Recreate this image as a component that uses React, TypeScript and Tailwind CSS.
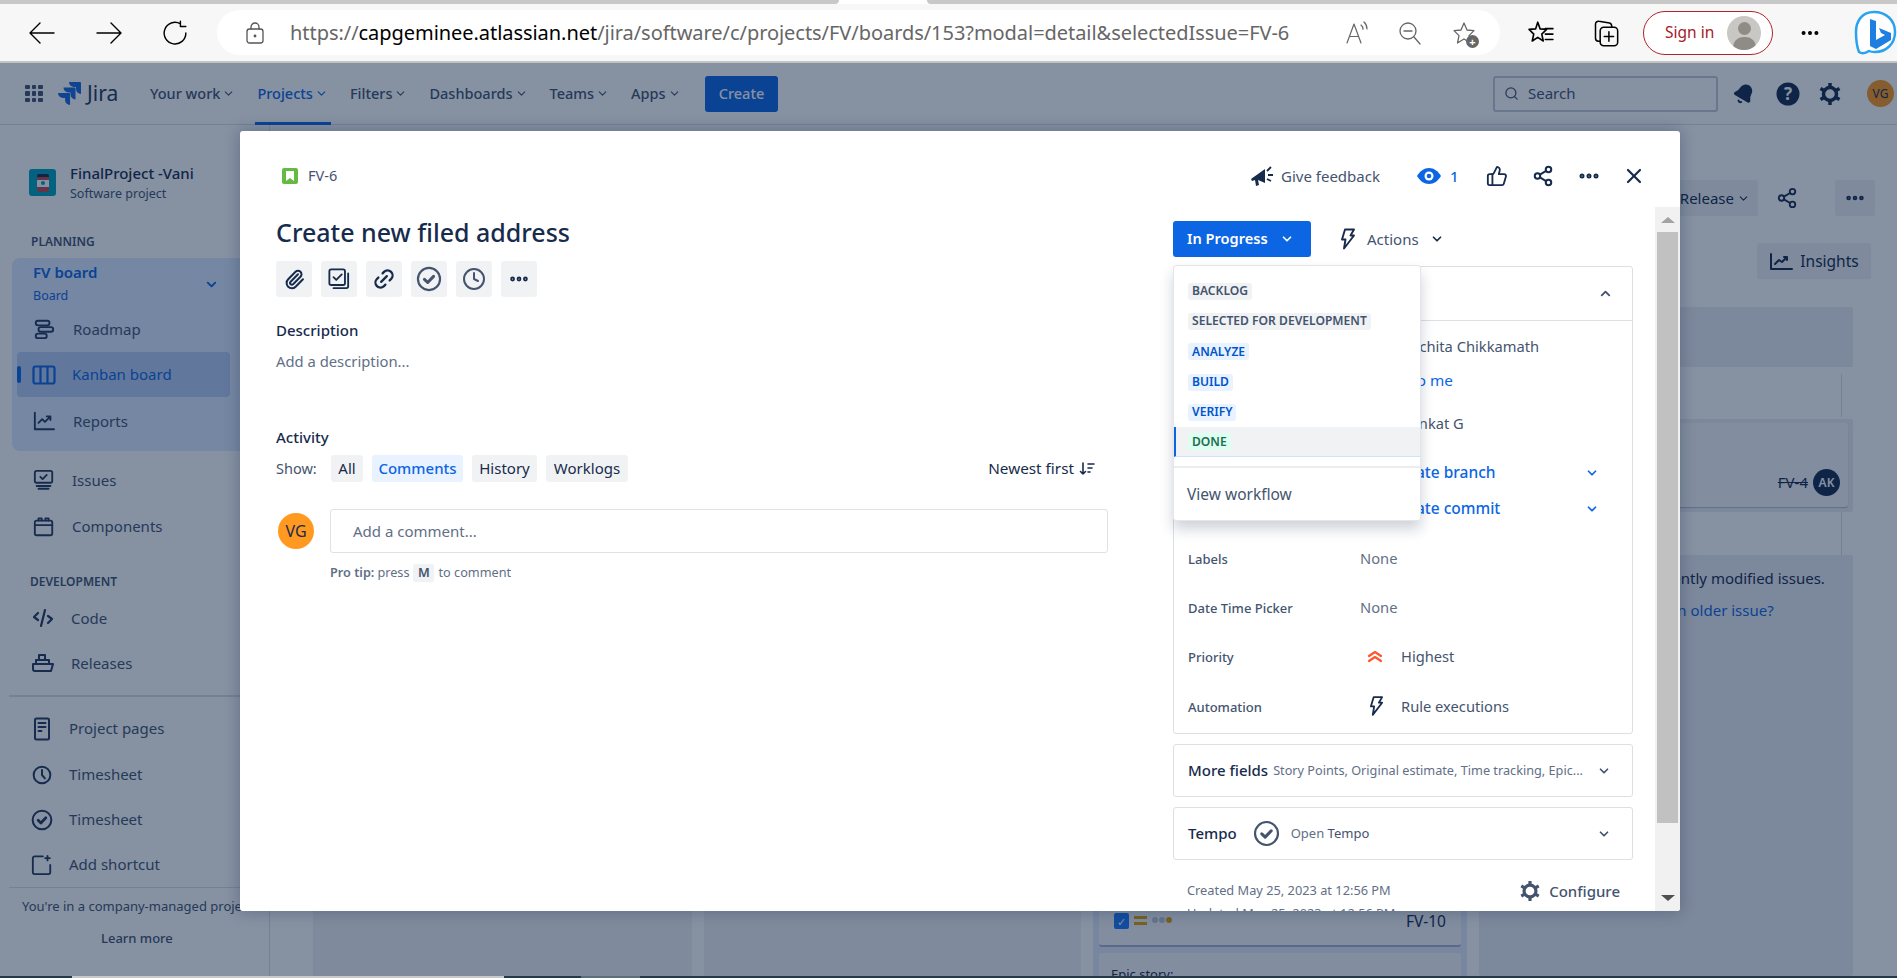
import {
  Bell,
  ChevronDown,
  ChevronUp,
  Clock,
  Ellipsis,
  Link2,
  Paperclip,
  Search,
  Share2,
  ThumbsUp,
  X,
} from 'lucide-react'
import { SiJira } from 'react-icons/si'

function Svg({ w = 24, h = 24, vb = '0 0 24 24', sw = 2, className = '', children }: { w?: number; h?: number; vb?: string; sw?: number; className?: string; children: React.ReactNode }) {
  return (
    <svg width={w} height={h} viewBox={vb} fill="none" stroke="currentColor" strokeWidth={sw} strokeLinecap="round" strokeLinejoin="round" className={className}>
      {children}
    </svg>
  )
}

function CheckCircle({ size = 24, sw = 2.2 }: { size?: number; sw?: number }) {
  return (
    <Svg w={size} h={size} sw={sw}>
      <circle cx="12" cy="12" r="10.2" />
      <path d="M7.8 12.3l3 2.9 5.4-5.6" strokeWidth={sw + 0.8} />
    </Svg>
  )
}

function Bolt({ w = 16, h = 22 }: { w?: number; h?: number }) {
  return (
    <Svg w={w} h={h} vb="0 0 16 22" sw={1.9}>
      <path d="M5 1.5h9L10.5 7.5H14L4 20.5l1.5-9H2z" />
    </Svg>
  )
}

function Gear({ size, color }: { size: number; color: string }) {
  return (
    <svg width={size} height={size} viewBox="0 0 24 24" fill="none" stroke={color} strokeWidth="3.500">
      <circle cx="12" cy="12" r="6.500" />
      <path d="M12 1v4M12 19v4M2.500 6.500l3.500 2M18 15.500l3.500 2M2.500 17.500l3.500-2M18 8.500l3.500-2" />
    </svg>
  )
}

function Lozenge({ tone, children }: { tone: 'gray' | 'blue' | 'green'; children: React.ReactNode }) {
  const styles = {
    gray: 'bg-[#f1f2f4] text-[#44546f]',
    blue: 'bg-[#e9f2ff] text-[#0055cc]',
    green: 'bg-[#dcfff1] text-[#216e4e]',
  }
  return <span className={`flex h-[17px] items-center rounded-[3px] px-[4px] text-[12.100px] font-semibold ${styles[tone]}`}>{children}</span>
}

function BrowserBar() {
  return (
    <div className="h-[63px] bg-[#f7f7f7]">
      <div className="flex h-[4px] bg-white">
        <div className="w-[839px] rounded-br bg-[#c8c8c8]" />
        <div className="ml-[88px] flex-1 rounded-bl bg-[#c8c8c8]" />
      </div>
      <div className="flex h-[57px] items-center text-black">
        <div className="ml-[29px] flex w-[188px] items-center">
          <Svg w={26} h={22} vb="0 0 26 22" sw={1.4}><path d="M25 11H1M11 1L1 11l10 10" /></Svg>
          <Svg w={26} h={22} vb="0 0 26 22" sw={1.4} className="ml-[41px]"><path d="M1 11h24M15 1l10 10-10 10" /></Svg>
          <Svg w={26} h={26} sw={1.3} className="ml-[40px]"><path d="M17 3.5A10 10 0 1 0 22 12M17 1v5h5" /></Svg>
        </div>
        <div className="flex h-[45px] w-[1283px] items-center rounded-full bg-white pl-[29px]">
          <Svg w={18} h={22} vb="0 0 18 22" sw={1.3} className="text-[#555]">
            <rect x="1" y="7" width="16" height="14" rx="2.5" />
            <path d="M5 7V5a4 4 0 0 1 8 0v2" />
            <circle cx="9" cy="14" r=".8" />
          </Svg>
          <div className="ml-[26px] w-[1010px] whitespace-nowrap text-[20px] tracking-[-0.05px] text-[#666]">
            https://<span className="text-black">capgeminee.atlassian.net</span>/jira/software/c/projects/FV/boards/153?modal=detail&amp;selectedIssue=FV-6
          </div>
          <div className="ml-[45px] text-[#666]">
            <Svg w={24} h={26} vb="0 0 24 26" sw={1.2}>
              <path d="M2 23L9 4l7 19M4.5 16.5h9M16 5c1.5 1.2 2 2.7 2 4.3M19 2c2.2 2 3 4.5 3 7" />
            </Svg>
          </div>
          <div className="ml-[29px] text-[#666]">
            <Svg w={24} h={26} sw={1.3}><circle cx="10" cy="10" r="8" /><path d="M6 10h8M16 16l6 7" /></Svg>
          </div>
          <div className="relative ml-[30px] text-[#666]">
            <Svg w={24} h={26} sw={1.3}><path d="M12 2l3 7 7 .6-5 5 1.5 7.4L12 18l-6.5 4L7 14.6 2 9.6 9 9z" /></Svg>
            <span className="absolute right-[-3px] bottom-[-2px] flex h-[13px] w-[13px] items-center justify-center rounded-full bg-[#666] text-[11px] leading-none font-bold text-white">+</span>
          </div>
        </div>
        <div className="ml-[28px]">
          <Svg w={26} h={28} sw={1.5}>
            <path d="M9 2l2.2 6.2 6 .5-4.5 4.3 1.4 6.4L9 16l-5.100 3.400 1.400-6.400L1 8.700l6-.5zM16 8h7M16 13h7M16 18h7" />
          </Svg>
        </div>
        <div className="ml-[38px]">
          <Svg w={28} h={30} sw={1.3}>
            <rect x="7" y="7" width="15" height="16" rx="3" />
            <path d="M7 19H5.500A2.500 2.500 0 0 1 3 16.500V4.500A2.500 2.500 0 0 1 6 2l9 1.500c1.500.300 2 1.500 2 3.500M14.500 11v8M10.500 15h8" />
          </Svg>
        </div>
        <div className="ml-[23px] flex h-[44px] w-[130px] items-center rounded-full border-[1.5px] border-[#b1242b] bg-white pl-[21px] text-[15.500px] text-[#a4202a]">
          Sign in
          <div className="relative ml-[13px] h-[34px] w-[34px] overflow-hidden rounded-full bg-[#c9c7c3]">
            <div className="absolute top-[6px] left-[11px] h-[13px] w-[13px] rounded-full bg-[#8f8c87]" />
            <div className="absolute top-[21px] left-[6px] h-[20px] w-[23px] rounded-full bg-[#8f8c87]" />
          </div>
        </div>
        <Ellipsis size={22} strokeWidth={2.4} className="ml-[26px]" />
        <div className="ml-[32px]">
          <svg width="44" height="46" viewBox="0 0 44 46" fill="none">
            <path d="M21 2C9 2 3 11 3 22c0 8 1 15 3 20 3 2 7 1 10-1 2 1 4 1 6 1 11 0 20-8 20-20S33 2 21 2z" fill="#fff" stroke="#2aa3ee" strokeWidth="2.500" />
            <path d="M17 9l6 2v19l9-5-4-2-2-5 12 5v7l-15 9-6-3z" fill="#1f7fe0" />
          </svg>
        </div>
      </div>
      <div className="h-[2px] bg-[#c4c4c4]" />
    </div>
  )
}

function TopNav({ label, active }: { label: string; active?: boolean }) {
  return (
    <div className={`relative flex h-[62px] items-center gap-[2px] text-[14.500px] font-medium whitespace-nowrap ${active ? 'text-[#0c66e4]' : 'text-[#44546f]'}`}>
      {label}
      <ChevronDown size={13} strokeWidth={2} />
      {active && <div className="absolute right-[-3px] bottom-0 left-[-2px] h-[3px] bg-[#0c66e4]" />}
    </div>
  )
}

function JiraHeader() {
  return (
    <div className="flex h-[62px] items-center border-b-[1.500px] border-[#dcdfe4] pl-[25px] text-[#172b4d]">
      <div className="grid w-[18px] grid-cols-3 gap-[2px]">
        {[0, 1, 2, 3, 4, 5, 6, 7, 8].map(i => <span key={i} className="h-[4.500px] w-[4.500px] rounded-[1px] bg-[#44546f]" />)}
      </div>
      <SiJira size={23} className="ml-[15px] text-[#1868db]" />
      <span className="ml-[6px] w-[34px] text-[21px] leading-none text-[#253858]">Jira</span>
      <div className="ml-[29px] flex w-[555px] gap-[22px]">
        <TopNav label="Your work" />
        <TopNav label="Projects" active />
        <TopNav label="Filters" />
        <TopNav label="Dashboards" />
        <TopNav label="Teams" />
        <TopNav label="Apps" />
      </div>
      <div className="flex h-[36px] w-[73px] items-center justify-center rounded-[3px] bg-[#0c66e4] text-[14.500px] font-medium text-white">Create</div>
      <div className="ml-[715px] flex h-[36px] w-[225px] items-center gap-[9px] rounded-[3px] border-2 border-[#c5ccd8] pl-[9px] text-[15px] text-[#44546f]">
        <Search size={15} strokeWidth={2} /> Search
      </div>
      <Bell size={22} fill="currentColor" strokeWidth={2} className="ml-[15px] rotate-[30deg] text-[#172b4d]" />
      <svg width="24" height="24" viewBox="0 0 24 24" className="ml-[21px]">
        <circle cx="12" cy="12" r="11.500" fill="#172b4d" />
        <text x="12" y="18" textAnchor="middle" fontSize="17" fontWeight="700" fill="#fff">?</text>
      </svg>
      <div className="ml-[18px]"><Gear size={24} color="#172b4d" /></div>
      <div className="ml-[25px] flex h-[27px] w-[27px] items-center justify-center rounded-full bg-[#ff991f] text-[12px] text-[#172b4d]">VG</div>
    </div>
  )
}

function NavRow({ icon, label, h = 44, gap = 16, pl = 32 }: { icon: React.ReactNode; label: string; h?: number; gap?: number; pl?: number }) {
  return (
    <div className="flex items-center text-[15px] text-[#44546f]" style={{ height: h, paddingLeft: pl }}>
      <div className="flex w-[24px] justify-center text-[#253858]">{icon}</div>
      <span style={{ marginLeft: gap }}>{label}</span>
    </div>
  )
}

function Sidebar() {
  return (
    <div className="w-[270px] shrink-0 border-r border-[#dcdfe4]">
      <div className="mt-[36px] flex h-[43px] items-center pl-[29px]">
        <div className="flex h-[27px] w-[27px] items-center justify-center rounded-[3px] bg-[#00a3bf]">
          <div className="h-[18px] w-[12px] overflow-hidden rounded-[2px] bg-[#c1494e]">
            <div className="h-[3px] bg-[#172b4d]" />
            <div className="mt-[3px] flex h-[7px] items-center justify-center bg-white">
              <span className="h-[4px] w-[4px] rounded-full bg-[#00a3bf]" />
            </div>
          </div>
        </div>
        <div className="ml-[14px]">
          <div className="text-[15px] leading-[22px] font-medium text-[#172b4d]">FinalProject -Vani</div>
          <div className="text-[12.500px] leading-[20px] text-[#44546f]">Software project</div>
        </div>
      </div>
      <div className="mt-[28px] flex h-[20px] items-center pl-[31px] text-[12px] font-semibold text-[#44546f]">PLANNING</div>
      <div className="mx-[12px] mt-[6px] h-[193px] rounded-[8px] bg-[#deebff]">
        <div className="flex h-[50px] items-center pt-[2px] pr-[38px] pl-[21px] text-[#0c66e4]">
          <div className="flex-1">
            <div className="text-[15px] leading-[24px] font-semibold">FV board</div>
            <div className="text-[12.500px] leading-[24px]">Board</div>
          </div>
          <ChevronDown size={15} strokeWidth={3} />
        </div>
        <div className="-ml-[12px]">
          <div className="-mt-[1px] mb-[1px]">
            <NavRow icon={<Svg w={22} h={22} sw={2}><rect x="3" y="3" width="15" height="5" rx="2.500" /><rect x="6" y="10" width="16" height="5" rx="2.500" /><rect x="3" y="17" width="12" height="5" rx="2.500" /></Svg>} label="Roadmap" gap={17} />
          </div>
          <div className="relative ml-[17px] flex h-[45px] w-[213px] items-center rounded-[4px] bg-[#b9ccf3] text-[15px] text-[#0c66e4]">
            <div className="absolute left-0 h-[17px] w-[4px] rounded-full bg-[#0c66e4]" />
            <div className="ml-[15px] flex w-[24px] justify-center">
              <Svg w={24} h={20} vb="0 0 24 20" sw={2.200}><rect x="1.500" y="1.500" width="21" height="17" rx="2" /><path d="M8.500 2v16M15.500 2v16" /></Svg>
            </div>
            <span className="ml-[16px]">Kanban board</span>
          </div>
          <NavRow icon={<Svg w={24} h={22} sw={2}><path d="M2 3v18h21M6 14l4-4 3 3 6-6M15 7h4v4" /></Svg>} label="Reports" h={48} gap={17} />
        </div>
      </div>
      <div className="mt-[6px]">
        <NavRow icon={<Svg w={22} h={22} sw={2}><rect x="2" y="2" width="19" height="13" rx="2" /><path d="M8 8.500l2.500 2.500L15 6.500M4 18.500h15M6 21.500h11" /></Svg>} label="Issues" h={46} gap={16} pl={32} />
        <NavRow icon={<Svg w={22} h={22} sw={2}><rect x="2" y="5" width="19" height="16" rx="2" /><path d="M2 10h19M6 5V2.500h3.500V5M13.500 5V2.500H17V5" /></Svg>} label="Components" h={47} gap={16} pl={32} />
      </div>
      <div className="mt-[22px] flex h-[20px] items-center pl-[30px] text-[12px] font-semibold text-[#44546f]">DEVELOPMENT</div>
      <div className="mt-[4px]">
        <NavRow icon={<Svg w={22} h={20} vb="0 0 22 20" sw={2.200}><path d="M6 5L2 9l4 3M16 8l4 3-4 4M13 2L9 18" /></Svg>} label="Code" gap={16} pl={31} />
        <div className="mt-[1px]"><NavRow icon={<Svg w={24} h={20} vb="0 0 24 20" sw={2}><path d="M2 11h20l-2 7H4a2 2 0 0 1-2-2zM5 11V7h13v4M8 7V2h6v5" /></Svg>} label="Releases" gap={16} pl={31} /></div>
      </div>
      <div className="mx-[9px] mt-[10px] h-[1.500px] bg-[#dcdfe4]" />
      <div className="mt-[10px]">
        <NavRow icon={<Svg w={18} h={24} vb="0 0 18 24" sw={2}><rect x="2" y="1.500" width="14" height="21" rx="1.500" /><path d="M5.500 6h7M5.500 10h7M5.500 14h3" /></Svg>} label="Project pages" gap={15} pl={30} />
        <div className="mt-[2px]"><NavRow icon={<Svg w={20} h={20} sw={2.400}><circle cx="12" cy="12" r="10" /><path d="M12 6v6l3.500 4" /></Svg>} label="Timesheet" gap={15} pl={30} /></div>
        <div className="mt-[1px]"><NavRow icon={<CheckCircle size={22} />} label="Timesheet" gap={15} pl={30} /></div>
        <div className="mt-[1px]"><NavRow icon={<Svg w={22} h={22} sw={2}><path d="M13 2.500H4a2 2 0 0 0-2 2V20a2 2 0 0 0 2 2h15a2 2 0 0 0 2-2v-8M18 2v5M15.500 4.500h5" /></Svg>} label="Add shortcut" gap={15} pl={30} /></div>
      </div>
      <div className="mx-[9px] h-[1.500px] bg-[#dcdfe4]" />
      <div className="mt-[8px] h-[20px] pl-[22px] text-[13px] leading-[20px] whitespace-nowrap text-[#44546f]">You're in a company-managed project</div>
      <div className="mt-[12px] h-[20px] pl-[101px] text-[13px] leading-[20px] font-medium text-[#44546f]">Learn more</div>
    </div>
  )
}

function Board() {
  return (
    <div className="min-w-0 flex-1 pl-[43px]">
      <div className="mt-[55px] flex h-[36px] justify-end pr-[22px]">
        <div className="flex w-[120px] items-center justify-end gap-[3px] rounded-[3px] bg-[#f1f2f4] pr-[8px] text-[15px] text-[#172b4d]">Release <ChevronDown size={13} /></div>
        <div className="ml-[18px] flex w-[24px] items-center text-[#172b4d]"><Share2 size={22} strokeWidth={2} /></div>
        <div className="ml-[35px] flex w-[40px] items-center justify-center rounded-[3px] bg-[#f1f2f4]"><Ellipsis size={22} strokeWidth={3} className="text-[#172b4d]" /></div>
      </div>
      <div className="mt-[27px] flex h-[36px] justify-end pr-[26px]">
        <div className="flex w-[114px] items-center justify-center gap-[7px] rounded-[3px] bg-[#f1f2f4] pt-[1px] text-[15.500px] text-[#172b4d]">
          <Svg w={24} h={20} vb="0 0 24 20" sw={2}><path d="M2 2v15h21M6 12l4-4 3 2 5-5M15 5h3v3" /></Svg> Insights
        </div>
      </div>
      <div className="mt-[28px] flex gap-[12px]">
        <div className="h-[669px] w-[379px] bg-[#f1f2f4]" />
        <div className="h-[669px] w-[377px] bg-[#f1f2f4]" />
        <div className="h-[669px] w-[374px] overflow-hidden bg-[#e4ecf9] px-[6px] pt-[540px]">
          <div className="h-[100px] rounded-[3px] border-b-2 border-[#a5b3cc] bg-[#f7f8f9] px-[15px] pt-[66px]">
            <div className="flex items-start">
              <div className="flex h-[16px] w-[15px] items-center justify-center rounded-[2px] bg-[#1d7afc] text-[11px] leading-none text-white">✓</div>
              <div className="mt-[3px] ml-[5px] h-[9px] w-[13px] border-y-[3px] border-[#e2a400]" />
              <div className="mt-[4px] ml-[5px] flex gap-[1px]">
                <span className="h-[6px] w-[6px] rounded-full bg-[#c1c7d0]" />
                <span className="h-[6px] w-[6px] rounded-full bg-[#c1c7d0]" />
                <span className="h-[6px] w-[6px] rounded-full bg-[#e2a400]" />
              </div>
              <span className="ml-auto text-[15.500px] leading-[16px] text-[#172b4d]">FV-10</span>
            </div>
          </div>
          <div className="mt-[6px] h-[40px] rounded-[3px] bg-[#f7f8f9] px-[12px] pt-[12px] text-[13px] text-[#172b4d]">Epic story:</div>
        </div>
        <div className="relative w-[374px]">
          <div className="h-[60px] rounded-t-[3px] bg-[#eceef1]" />
          <div className="mt-[52px] h-[93px] rounded-[3px] bg-[#eceef1] px-[5px] pt-[4px]">
            <div className="flex h-[84px] items-end justify-end gap-[5px] rounded-[3px] bg-[#f7f8f9] pr-[8px] pb-[11px] shadow-[0_1px_1px_rgba(9,30,66,0.25)]">
              <span className="text-[15px] leading-[27px] text-[#172b4d] line-through">FV-4</span>
              <span className="flex h-[27px] w-[27px] items-center justify-center rounded-full bg-[#172b4d] text-[12px] font-semibold text-white">AK</span>
            </div>
          </div>
          <div className="mt-[43px] h-[421px] rounded-[3px] bg-[#eceef1] pt-[12px] pl-[44px] text-center text-[15px] leading-[22px] text-[#172b4d]">
            <div>Only showing recently modified issues.</div>
            <div className="mt-[10px] mr-[18px] text-[#0c66e4]">Looking for an older issue?</div>
          </div>
          <div className="absolute top-[67px] right-[11px] h-[43px] w-px bg-[#dcdfe4]" />
          <div className="absolute top-[205px] right-[11px] h-[43px] w-px bg-[#dcdfe4]" />
        </div>
      </div>
    </div>
  )
}

function LeftColumn() {
  const filters = [
    { label: 'All', w: 'w-[32px]' },
    { label: 'Comments', w: 'w-[91px]', active: true },
    { label: 'History', w: 'w-[65px]' },
    { label: 'Worklogs', w: 'w-[82px]' },
  ]
  const quick = [
    <Paperclip key="a" size={21} strokeWidth={2.300} className="text-[#172b4d]" />,
    <Svg key="b" w={22} h={22} sw={2} className="text-[#172b4d]"><rect x="1.500" y="1.500" width="17" height="17" rx="2" /><path d="M6 10l3 3 6-6M22 6v14a2 2 0 0 1-2 2H6" /></Svg>,
    <Link2 key="c" size={24} strokeWidth={2.300} className="-rotate-45 text-[#172b4d]" />,
    <span key="d" className="text-[#44546f]"><CheckCircle size={26} sw={2} /></span>,
    <Clock key="e" size={24} strokeWidth={2} className="text-[#44546f]" />,
    <Ellipsis key="f" size={22} strokeWidth={3.200} className="text-[#172b4d]" />,
  ]
  return (
    <div className="w-[933px] shrink-0 pl-[36px]">
      <div className="mt-[9px] flex h-[34px] items-center text-[25px] font-medium text-[#172b4d]">Create new filed address</div>
      <div className="mt-[11px] flex gap-[9px]">
        {quick.map((icon, i) => (
          <div key={i} className="flex h-[36px] w-[36px] items-center justify-center rounded-[3px] bg-[#f1f2f4]">{icon}</div>
        ))}
      </div>
      <div className="mt-[23px] flex h-[20px] items-center text-[15px] font-medium text-[#172b4d]">Description</div>
      <div className="mt-[11px] flex h-[20px] items-center text-[14.800px] text-[#626f86]">Add a description...</div>
      <div className="mt-[56px] flex h-[20px] items-center text-[15px] font-medium text-[#172b4d]">Activity</div>
      <div className="mt-[8px] flex h-[27px] w-[819px] items-center text-[15px] text-[#172b4d]">
        <span className="w-[55px] text-[14.500px] text-[#44546f]">Show:</span>
        <div className="flex gap-[9px]">
          {filters.map(f => (
            <div key={f.label} className={`flex h-[27px] items-center justify-center rounded-[3px] ${f.w} ${f.active ? 'bg-[#e9f2ff] font-medium text-[#0c66e4]' : 'bg-[#f1f2f4]'}`}>{f.label}</div>
          ))}
        </div>
        <div className="ml-auto flex items-center gap-[5px] text-[15.300px]">
          Newest first
          <Svg w={16} h={16} vb="0 0 16 16" sw={1.600}><path d="M4 2v11M1.500 10.500L4 13l2.500-2.500M9 3h6M9 7h4M9 11h2" /></Svg>
        </div>
      </div>
      <div className="mt-[27px] flex items-center">
        <div className="ml-[2px] flex h-[36px] w-[36px] items-center justify-center rounded-full bg-[#ff991f] text-[16px] text-[#172b4d]">VG</div>
        <div className="ml-[16px] flex h-[44px] w-[778px] items-center rounded-[3px] border-[1.500px] border-[#dfe1e6] pl-[22px] text-[15px] text-[#626f86]">Add a comment...</div>
      </div>
      <div className="mt-[11px] ml-[54px] flex h-[18px] items-center text-[12.700px] text-[#626f86]">
        <b className="font-semibold">Pro tip:</b>
        <span className="ml-[3px]">press</span>
        <span className="mx-[4px] flex h-[18px] w-[21px] items-center justify-center rounded-[2px] bg-[#f1f2f4] font-semibold text-[#44546f]">M</span>
        to comment
      </div>
    </div>
  )
}

function FieldRow({ label, h = 50, children }: { label: string; h?: number; children: React.ReactNode }) {
  return (
    <div className="flex items-center" style={{ height: h }}>
      <div className="w-[186px] shrink-0 pl-[14px] text-[13px] font-medium text-[#44546f]">{label}</div>
      <div className="mb-[3px] flex items-center text-[14.700px] text-[#44546f]">{children}</div>
    </div>
  )
}

function RightColumn() {
  return (
    <div className="w-[482px] shrink-0">
      <div className="mt-[14px] flex h-[36px] items-center">
        <div className="flex h-[36px] w-[138px] items-center rounded-[3px] bg-[#0c66e4] pl-[14px] text-[14.600px] font-semibold text-white">
          In Progress
          <ChevronDown size={14} strokeWidth={3} className="ml-[12px]" />
        </div>
        <div className="ml-[29px] text-[#172b4d]"><Bolt /></div>
        <span className="ml-[11px] text-[15px] text-[#44546f]">Actions</span>
        <ChevronDown size={14} strokeWidth={3} className="ml-[11px] text-[#172b4d]" />
      </div>
      <div className="mt-[9px] w-[460px] rounded-[3px] border border-[#dcdfe4]">
        <div className="flex h-[54px] items-center justify-between border-b border-[#dcdfe4] pr-[19px] pl-[14px] text-[15px] font-medium text-[#172b4d]">
          Details
          <ChevronUp size={15} strokeWidth={3} className="text-[#44546f]" />
        </div>
        <FieldRow label="Assignee" h={54}><span className="ml-[42px]">Rachita Chikkamath</span></FieldRow>
        <div className="-mt-[2px] flex h-[14px] items-center pl-[186px] text-[15.300px] text-[#0c66e4]">Assign to me</div>
        <div className="mt-[13px]"><FieldRow label="Reporter"><span className="ml-[42px]">Venkat G</span></FieldRow></div>
        <div className="mt-[8px] flex h-[30px] items-center pr-[33px] pl-[217px] text-[15.500px] font-medium text-[#0c66e4]">
          <span className="flex-1">Create branch</span><ChevronDown size={14} strokeWidth={3} />
        </div>
        <div className="mt-[6px] flex h-[30px] items-center pr-[33px] pl-[217px] text-[15.500px] font-medium text-[#0c66e4]">
          <span className="flex-1">Create commit</span><ChevronDown size={14} strokeWidth={3} />
        </div>
        <div className="mt-[11px]"><FieldRow label="Labels"><span className="text-[#626f86]">None</span></FieldRow></div>
        <FieldRow label="Date Time Picker" h={48}><span className="text-[#626f86]">None</span></FieldRow>
        <FieldRow label="Priority">
          <Svg w={16} h={14} vb="0 0 16 14" sw={2.200} className="ml-[7px] text-[#ff5630]"><path d="M2 7l6-4 6 4M2 12l6-4 6 4" /></Svg>
          <span className="ml-[18px]">Highest</span>
        </FieldRow>
        <FieldRow label="Automation">
          <span className="ml-[9px] text-[#172b4d]"><Bolt w={15} h={22} /></span>
          <span className="ml-[17px]">Rule executions</span>
        </FieldRow>
      </div>
      <div className="mt-[10px] flex h-[53px] w-[460px] items-center rounded-[3px] border border-[#dcdfe4] pr-[21px] pl-[14px]">
        <span className="text-[15px] font-medium text-[#172b4d]">More fields</span>
        <span className="ml-[5px] flex-1 text-[12.700px] whitespace-nowrap text-[#626f86]">Story Points, Original estimate, Time tracking, Epic...</span>
        <ChevronDown size={14} strokeWidth={3} className="text-[#44546f]" />
      </div>
      <div className="mt-[10px] flex h-[53px] w-[460px] items-center rounded-[3px] border border-[#dcdfe4] pr-[21px] pl-[14px]">
        <span className="text-[15px] font-medium text-[#172b4d]">Tempo</span>
        <span className="ml-[16px] text-[#44546f]"><CheckCircle size={27} sw={1.900} /></span>
        <span className="ml-[11px] flex-1 text-[13px] text-[#626f86]">Open <span className="text-[#44546f]">Tempo</span></span>
        <ChevronDown size={14} strokeWidth={3} className="text-[#44546f]" />
      </div>
      <div className="mt-[20px] flex h-[22px] w-[460px] items-center pr-[13px] pl-[14px] text-[12.800px] text-[#626f86]">
        <span className="flex-1">Created May 25, 2023 at 12:56 PM</span>
        <div className="mr-[8px]"><Gear size={22} color="#44546f" /></div>
        <span className="text-[15px] font-medium text-[#44546f]">Configure</span>
      </div>
      <div className="mt-[2px] flex h-[20px] items-center pl-[14px] text-[12.800px] text-[#626f86]">Updated May 25, 2023 at 12:56 PM</div>
    </div>
  )
}

function StatusMenu() {
  const items: { label: string; tone: 'gray' | 'blue' | 'green' }[] = [
    { label: 'BACKLOG', tone: 'gray' },
    { label: 'SELECTED FOR DEVELOPMENT', tone: 'gray' },
    { label: 'ANALYZE', tone: 'blue' },
    { label: 'BUILD', tone: 'blue' },
    { label: 'VERIFY', tone: 'blue' },
  ]
  return (
    <div className="absolute top-[134px] left-[933px] h-[256px] w-[248px] rounded-[3px] border border-[#e4e6ea] bg-white pt-[10px] shadow-[0_8px_14px_rgba(9,30,66,0.2)]">
      {items.map(it => (
        <div key={it.label} className="flex h-[30.300px] items-center pl-[14px]"><Lozenge tone={it.tone}>{it.label}</Lozenge></div>
      ))}
      <div className="flex h-[30px] items-center border-b border-l-2 border-[#cfe1fd] border-l-[#0c66e4] bg-[#f1f2f4] pl-[12px]"><Lozenge tone="green">DONE</Lozenge></div>
      <div className="mt-[9px] h-[2px] bg-[#ebecf0]" />
      <div className="mt-[16px] flex h-[20px] items-center pl-[13px] text-[15.500px] text-[#44546f]">View workflow</div>
    </div>
  )
}

function IssueModal() {
  return (
    <div className="absolute top-[68px] left-[240px] flex h-[780px] w-[1440px] flex-col overflow-hidden rounded-[3px] bg-white shadow-[0_0_16px_rgba(9,30,66,0.3)]">
      <div className="mt-[21px] flex h-[48px] shrink-0 items-center pr-[34px] pl-[42px] text-[#44546f]">
        <div className="flex h-[16px] w-[16px] items-center justify-center rounded-[2px] bg-[#65ba43]">
          <svg width="8" height="10" viewBox="0 0 8 10" fill="#fff"><path d="M0 0h8v10L4 7l-4 3z" /></svg>
        </div>
        <span className="ml-[10px] text-[14.500px]">FV-6</span>
        <svg width="24" height="22" viewBox="0 0 24 22" className="ml-[auto] text-[#172b4d]" fill="currentColor">
          <path d="M0 14L14 4v14L7 15l1 5-3 1-1-6-3 1z" />
          <path d="M16 6l4-4M17 10h5M16 14l4 2" stroke="currentColor" strokeWidth="1.800" />
        </svg>
        <span className="ml-[6px] w-[136px] text-[15px] text-[#44546f]">Give feedback</span>
        <svg width="24" height="16" viewBox="0 0 24 16" className="text-[#0c66e4]">
          <path d="M0 8c3-5 7-8 12-8s9 3 12 8c-3 5-7 8-12 8S3 13 0 8z" fill="currentColor" />
          <circle cx="12" cy="8" r="4.500" fill="#fff" />
          <circle cx="12" cy="8" r="2.300" fill="currentColor" />
        </svg>
        <span className="ml-[9px] w-[36px] text-[15px] font-medium text-[#0c66e4]">1</span>
        <ThumbsUp size={22} strokeWidth={2} className="text-[#172b4d]" />
        <Share2 size={22} strokeWidth={2.200} className="ml-[24px] text-[#172b4d]" />
        <Ellipsis size={24} strokeWidth={3} className="ml-[23px] text-[#172b4d]" />
        <X size={24} strokeWidth={2.200} className="ml-[21px] text-[#172b4d]" />
      </div>
      <div className="mt-[7px] flex min-h-0 flex-1">
        <LeftColumn />
        <RightColumn />
        <div className="flex w-[25px] flex-col items-center bg-[#f1f1f1]">
          <div className="flex h-[25px] items-center"><div className="h-0 w-0 border-x-[7px] border-b-[6px] border-x-transparent border-b-[#a3a3a3]" /></div>
          <div className="h-[591px] w-[21px] bg-[#c1c1c1]" />
          <div className="mt-auto flex h-[27px] items-center"><div className="h-0 w-0 border-x-[7px] border-t-[6px] border-x-transparent border-t-[#505050]" /></div>
        </div>
      </div>
      <StatusMenu />
    </div>
  )
}

export default function App() {
  return (
    <div className="h-[978px] w-[1897px] overflow-hidden bg-white font-['Noto_Sans',sans-serif]">
      <BrowserBar />
      <div className="relative h-[913px] overflow-hidden">
        <JiraHeader />
        <div className="flex">
          <Sidebar />
          <Board />
        </div>
        <div className="absolute inset-0 bg-[#091e42]/49" />
        <IssueModal />
      </div>
      <div className="flex h-[2px] bg-[#1f3b4d]">
        <div className="w-[72px]" />
        <div className="w-[432px] bg-[#c8c8c8]" />
        <div className="ml-[77px] w-[59px] bg-[#5a6f7c]" />
      </div>
    </div>
  )
}
